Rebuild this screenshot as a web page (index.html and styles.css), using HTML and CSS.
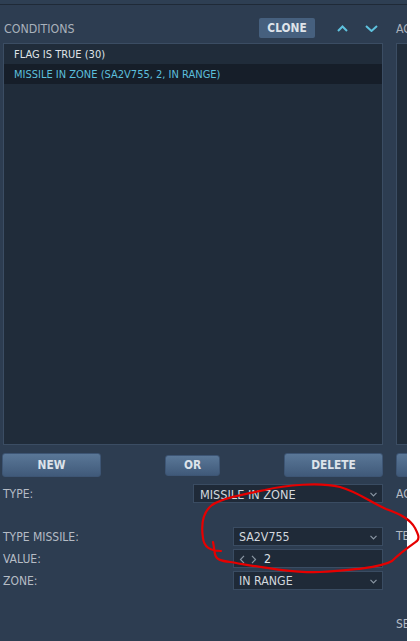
FILE: index.html
```html
<!DOCTYPE html>
<html>
<head>
<meta charset="utf-8">
<link rel="stylesheet" href="styles.css">
</head>
<body>
<div class="page">
  <div class="app">
    <div class="topstrip"></div>
    <div class="panels">
      <section class="panel left">
        <div class="panel-head">
          <span class="title">CONDITIONS</span>
          <button class="btn-flat">CLONE</button>
          <button class="chev chev-up"><svg width="11" height="7" viewBox="0 0 11 7"><polyline points="1,6 5.5,1.5 10,6" /></svg></button>
          <button class="chev chev-down"><svg width="13" height="7" viewBox="0 0 13 7"><polyline points="1,1 6.5,6 12,1" /></svg></button>
        </div>
        <div class="list">
          <div class="row">FLAG IS TRUE (30)</div>
          <div class="row selected">MISSILE IN ZONE (SA2V755, 2, IN RANGE)</div>
        </div>
        <div class="btn-row">
          <button class="btn btn-wide">NEW</button>
          <button class="btn btn-small">OR</button>
          <button class="btn btn-wide">DELETE</button>
        </div>
        <div class="field field-type">
          <span class="label">TYPE:</span>
          <div class="select select-type">MISSILE IN ZONE<svg class="caret" width="7" height="5" viewBox="0 0 7 5"><polyline points="0.5,0.8 3.5,3.8 6.5,0.8" /></svg></div>
        </div>
        <div class="params">
          <div class="field">
            <span class="label">TYPE MISSILE:</span>
            <div class="select select-param">SA2V755<svg class="caret" width="7" height="5" viewBox="0 0 7 5"><polyline points="0.5,0.8 3.5,3.8 6.5,0.8" /></svg></div>
          </div>
          <div class="field">
            <span class="label">VALUE:</span>
            <div class="select select-param spin">
              <svg class="arrows" width="18" height="9" viewBox="0 0 18 9"><polyline points="5,0.8 1.5,4.5 5,8.2" /><polyline points="13,0.8 16.5,4.5 13,8.2" /></svg>
              <span class="value">2</span>
            </div>
          </div>
          <div class="field">
            <span class="label">ZONE:</span>
            <div class="select select-param">IN RANGE<svg class="caret" width="7" height="5" viewBox="0 0 7 5"><polyline points="0.5,0.8 3.5,3.8 6.5,0.8" /></svg></div>
          </div>
        </div>
      </section>
      <section class="panel right">
        <div class="panel-head">
          <span class="title">ACTIONS</span>
        </div>
        <div class="list"></div>
        <div class="btn-row">
          <button class="btn btn-wide">NEW</button>
        </div>
        <div class="field field-type">
          <span class="label">ACTION:</span>
        </div>
        <div class="params">
          <div class="field">
            <span class="label">TEXT:</span>
          </div>
        </div>
        <div class="field field-last">
          <span class="label">SECONDS:</span>
        </div>
      </section>
    </div>
  </div>
  <svg class="scribble" width="420" height="641" viewBox="0 0 420 641">
    <path d="M 221 551 C 212 551, 204 548, 203 538 C 201 525, 203 512, 212 505 C 222 498, 245 494, 265 490 C 285 485, 320 482, 340 487 C 358 492, 370 502, 386 509 C 400 514, 410 519, 415 528 C 418 534, 420 538, 417 541 C 410 546, 400 553, 392 561 C 380 568, 350 570, 320 572 C 290 573, 255 566, 230 562 C 222 561, 216 560, 215 554 C 214 550, 214 546, 213 542" />
  </svg>
</div>
</body>
</html>
```
FILE: styles.css
```css
html, body {
  margin: 0;
  padding: 0;
  background: #ffffff;
}

.page {
  position: relative;
  width: 420px;
  height: 641px;
  overflow: hidden;
}

.app {
  width: 407px;
  height: 641px;
  overflow: hidden;
  background: #2d3d51;
  font-family: "DejaVu Sans Condensed", "DejaVu Sans", sans-serif;
  font-stretch: condensed;
  color: #b5bcc5;
}

.topstrip {
  height: 4px;
  background: #2e3f53;
  border-bottom: 1px solid #1f2a37;
}

.panels {
  display: flex;
  gap: 13px;
  padding-left: 2px;
}

.panel {
  display: flex;
  flex-direction: column;
  flex: none;
}

.panel.left {
  width: 381px;
}

.panel.right {
  width: 381px;
}

.panel-head {
  display: flex;
  align-items: center;
  height: 20px;
  margin-top: 13px;
}

.title {
  flex: 1;
  font-size: 12.3px;
  color: #a9b1bb;
  padding-left: 2px;
  padding-top: 1px;
}

.right .title {
  padding-left: 0;
}

.btn-flat {
  width: 56px;
  height: 20px;
  border: none;
  border-radius: 2px;
  background: #46607e;
  color: #dfe4ea;
  font-family: inherit;
  font-stretch: condensed;
  font-weight: bold;
  font-size: 11.8px;
  padding: 0;
  margin-right: 15px;
}

.chev {
  width: 24px;
  height: 20px;
  border: none;
  background: none;
  padding: 0;
  display: flex;
  align-items: center;
  justify-content: center;
}

.chev-up {
  margin-right: 5px;
}

.chev svg polyline {
  fill: none;
  stroke: #5ec2de;
  stroke-width: 2;
}

.list {
  margin-top: 5px;
  margin-left: 1px;
  height: 402px;
  box-sizing: border-box;
  border: 1px solid #3b4d63;
  background: #202c3a;
  font-size: 11px;
}

.right .list {
  margin-left: 0;
}

.row {
  height: 20px;
  line-height: 21px;
  padding-left: 10px;
  color: #dfe3e8;
}

.row.selected {
  background: #161e29;
  color: #5cbfdc;
}

.btn-row {
  display: flex;
  justify-content: space-between;
  align-items: center;
  margin-top: 8px;
  height: 24px;
}

.btn {
  height: 24px;
  border: 1px solid #3d5574;
  border-radius: 3px;
  background: linear-gradient(#5a7797, #405a7a);
  color: #dde3ea;
  font-family: inherit;
  font-stretch: condensed;
  font-weight: bold;
  font-size: 11.8px;
  padding: 0;
}

.btn-wide {
  width: 99px;
}

.btn-small {
  width: 55px;
  height: 21px;
}

.field {
  display: flex;
  align-items: center;
  justify-content: space-between;
  height: 19px;
}

.field-type {
  margin-top: 7px;
}

.label {
  font-size: 12px;
  color: #b5bcc5;
  padding-left: 1px;
  padding-top: 1px;
}

.right .label {
  padding-left: 0;
}

.select {
  display: flex;
  align-items: center;
  box-sizing: border-box;
  height: 19px;
  border: 1px solid #3a4c62;
  background: #1f2a38;
  color: #d3d8de;
  font-size: 12.3px;
  padding-left: 5px;
  padding-right: 5px;
  padding-top: 1px;
}

.select-type {
  width: 190px;
  padding-left: 6px;
  font-size: 12.6px;
}

.select-param {
  width: 150px;
}

.caret {
  margin-left: auto;
}

.caret polyline,
.arrows polyline {
  fill: none;
  stroke: #8a96a3;
  stroke-width: 1.2;
}

.arrows {
  margin-right: 7px;
}

.value {
  color: #dfe3e8;
}

.params {
  display: flex;
  flex-direction: column;
  gap: 3px;
  margin-top: 24px;
}

.field-last {
  margin-top: 23px;
}

.right .params .field {
  height: 63px;
  align-items: flex-start;
  padding-top: 1px;
}

.scribble {
  position: absolute;
  left: 0;
  top: 0;
  pointer-events: none;
}

.scribble path {
  fill: none;
  stroke: #e60000;
  stroke-width: 2.2;
  stroke-linecap: round;
  stroke-linejoin: round;
}
```
